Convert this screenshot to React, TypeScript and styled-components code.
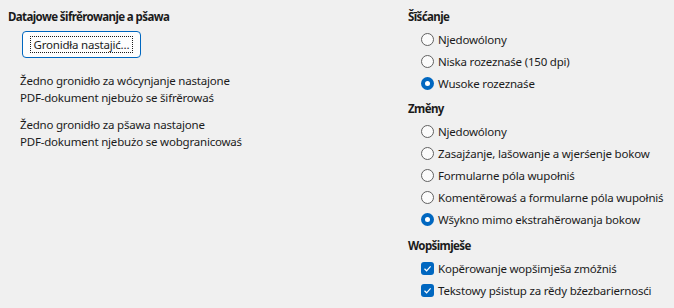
import styled, { createGlobalStyle } from "styled-components";

const GlobalStyle = createGlobalStyle`
	html, body {
		margin: 0;
		padding: 0;
		background: #f0f0f0;
	}
	body {
		font-family: "Noto Sans", "Liberation Sans", sans-serif;
		font-size: 11.5px;
		letter-spacing: -0.2px;
		color: #1b1b1b;
	}
`;

const Page = styled.div({
	width: 674,
	height: 308,
	display: "grid",
	gridTemplateColumns: "400px 1fr",
	padding: "7px 0 0 8px",
	boxSizing: "border-box",
	overflow: "hidden",
	whiteSpace: "nowrap"
});

const Column = styled.div({
	display: "flex",
	flexDirection: "column"
});

const Heading = styled.div<{ gapTop?: number }>((props) => ({
	height: 20,
	lineHeight: "20px",
	fontWeight: 700,
	letterSpacing: "-0.6px",
	marginTop: props.gapTop ?? 0
}));

const Button = styled.button({
	marginTop: 4,
	marginLeft: 14,
	width: 119,
	height: 27,
	padding: 0,
	display: "flex",
	alignItems: "center",
	justifyContent: "center",
	border: "1px solid #0067c0",
	borderRadius: 4,
	background: "#fdfdfd",
	font: "inherit",
	letterSpacing: "inherit",
	color: "inherit"
});

const FocusRing = styled.span({
	outline: "1px dotted #1b1b1b",
	outlineOffset: 0,
	padding: "0 2px",
	lineHeight: "15px"
});

const Notes = styled.div({
	marginTop: 14,
	marginLeft: 12,
	display: "flex",
	flexDirection: "column",
	gap: 10
});

const Note = styled.p({
	margin: 0,
	lineHeight: "17px"
});

const Options = styled.div({
	display: "flex",
	flexDirection: "column",
	marginTop: 1,
	paddingLeft: 13
});

const Option = styled.label({
	height: 22,
	display: "flex",
	alignItems: "center",
	gap: 4
});

const RadioMark = styled.span<{ checked?: boolean }>((props) => ({
	width: 13,
	height: 13,
	boxSizing: "border-box",
	borderRadius: "50%",
	border: props.checked ? "none" : "1px solid #616161",
	background: props.checked ? "#0067c0" : "#fbfbfb",
	display: "flex",
	alignItems: "center",
	justifyContent: "center",
	flexShrink: 0,
	"&::after": {
		content: '""',
		display: props.checked ? "block" : "none",
		width: 5,
		height: 5,
		borderRadius: "50%",
		background: "#fff"
	}
}));

const CheckMark = styled.span({
	width: 13,
	height: 13,
	borderRadius: 3,
	background: "#0067c0",
	display: "flex",
	alignItems: "center",
	justifyContent: "center",
	flexShrink: 0
});

const Radio = ({ label, checked }: { label: string; checked?: boolean }) => (
	<Option>
		<RadioMark checked={checked} />
		<span>{label}</span>
	</Option>
);

const Check = ({ label }: { label: string }) => (
	<Option>
		<CheckMark>
			<svg width="9" height="9" viewBox="0 0 9 9">
				<path d="M1.5 4.8 L3.6 6.8 L7.6 2.4" fill="none" stroke="#fff" strokeWidth="1.2" />
			</svg>
		</CheckMark>
		<span>{label}</span>
	</Option>
);

export default function App() {
	return (
		<>
			<GlobalStyle />
			<Page>
				<Column>
					<Heading>Datajowe šifrěrowanje a pšawa</Heading>
					<Button>
						<FocusRing>Gronidła nastajić…</FocusRing>
					</Button>
					<Notes>
						<Note>
							Žedno gronidło za wócynjanje nastajone
							<br />
							PDF-dokument njebużo se šifrěrowaś
						</Note>
						<Note>
							Žedno gronidło za pšawa nastajone
							<br />
							PDF-dokument njebużo se wobgranicowaś
						</Note>
					</Notes>
				</Column>
				<Column>
					<Heading>Šīšćanje</Heading>
					<Options>
						<Radio label="Njedowólony" />
						<Radio label="Niska rozeznaśe (150 dpi)" />
						<Radio label="Wusoke rozeznaśe" checked />
					</Options>
					<Heading gapTop={5}>Změny</Heading>
					<Options>
						<Radio label="Njedowólony" />
						<Radio label="Zasajźanje, lašowanje a wjerśenje bokow" />
						<Radio label="Formularne póla wupołniś" />
						<Radio label="Komentěrowaś a formularne póla wupołniś" />
						<Radio label="Wšykno mimo ekstrahěrowanja bokow" checked />
					</Options>
					<Heading gapTop={6}>Wopšimješe</Heading>
					<Options>
						<Check label="Kopěrowanje wopšimješa zmóžniś" />
						<Check label="Tekstowy pśistup za rědy bźezbariernosći" />
					</Options>
				</Column>
			</Page>
		</>
	);
}
